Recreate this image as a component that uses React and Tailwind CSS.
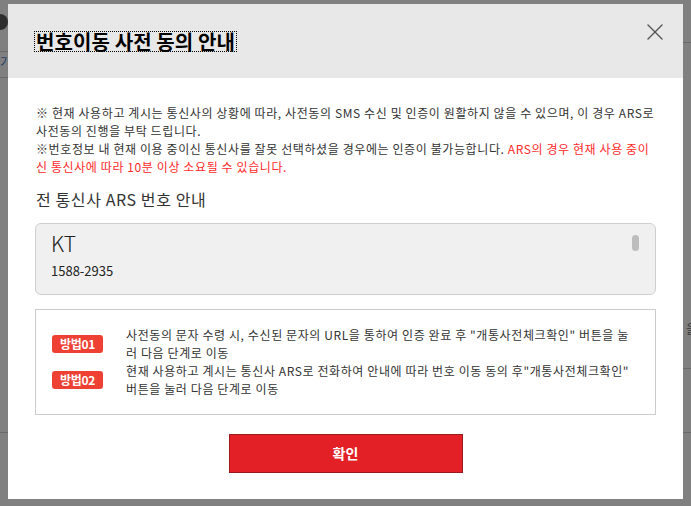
import { X } from 'lucide-react';

const font = { fontFamily: '"Noto Sans CJK KR", "Noto Sans", sans-serif' };

const methods = [
  {
    label: '방법01',
    lines: ['사전동의 문자 수령 시, 수신된 문자의 URL을 통하여 인증 완료 후 "개통사전체크확인" 버튼을 눌', '러 다음 단계로 이동'],
  },
  {
    label: '방법02',
    lines: ['현재 사용하고 계시는 통신사 ARS로 전화하여 안내에 따라 번호 이동 동의 후"개통사전체크확인"', '버튼을 눌러 다음 단계로 이동'],
  },
];

const App = () => {
  return (
    <div className="relative w-[691px] h-[506px] overflow-hidden bg-[#808080] pl-[8px] pt-[4px]" style={font}>
      {/* dimmed page behind the modal */}
      <div className="absolute left-[-8px] top-[14px] w-4 h-4 rounded-full bg-[#2e2e2e]" />
      <div className="absolute left-0 top-[51px] w-2 h-px bg-[#6a6a6a]" />
      <div className="absolute left-0 top-[55px] text-[12px] leading-[14px] text-[#1f3f6a]">기</div>
      <div className="absolute left-0 top-[77px] w-2 h-px bg-[#6a6a6a]" />
      <div className="absolute left-0 top-[432px] w-2 h-px bg-[#6a6a6a]" />
      <div className="absolute right-0 top-[42px] w-2 h-px bg-[#6a6a6a]" />
      <div className="absolute right-[-6px] top-[322px] text-[12px] leading-[14px] text-[#3a3a3a]">을</div>
      <div className="absolute right-0 top-[368px] w-2 h-px bg-[#6a6a6a]" />
      <div className="absolute right-0 top-[432px] w-2 h-px bg-[#6a6a6a]" />

      {/* modal */}
      <div className="relative w-[675px] h-[495px] bg-white">
        <div className="relative h-[74px] bg-[#e8e8e8] flex items-center px-[28px]">
          <h2 className="text-[20px] font-bold text-black leading-[17px] outline-1 outline-dotted outline-black outline-offset-[1px] tracking-[0.1px]">
            번호이동 사전 동의 안내
          </h2>
          <button className="absolute right-[14px] top-[14px] text-[#555]">
            <X size={28} strokeWidth={1.2} />
          </button>
        </div>

        <div className="px-[27px] pt-[26px]">
          <p className="text-[12px] leading-[18px] text-[#333] whitespace-nowrap tracking-[0.6px] pl-px">
            ※ 현재 사용하고 계시는 통신사의 상황에 따라, 사전동의 SMS 수신 및 인증이 원활하지 않을 수 있으며, 이 경우 ARS로
            <br />
            사전동의 진행을 부탁 드립니다.
            <br />
            ※번호정보 내 현재 이용 중이신 통신사를 잘못 선택하셨을 경우에는 인증이 불가능합니다.{' '}
            <span className="text-[#ff2a2a]">
              ARS의 경우 현재 사용 중이
              <br />
              신 통신사에 따라 10분 이상 소요될 수 있습니다.
            </span>
          </p>

          <h3 className="mt-[12px] text-[16px] leading-[22px] text-[#333] tracking-[0.6px] pl-px">전 통신사 ARS 번호 안내</h3>

          <div className="relative mt-[13px] h-[72px] rounded-[6px] border border-[#cfcfcf] bg-[#f0f0f0] pl-[15px] pt-[7px]">
            <div className="text-[21px] leading-[24px] text-[#222] font-light">KT</div>
            <div className="mt-[7px] text-[13px] leading-[18px] text-[#222]">1588-2935</div>
            <div className="absolute right-[16px] top-[11px] w-[7px] h-[16px] rounded-full bg-[#bdbdbd]" />
          </div>

          <div className="mt-[14px] border border-[#cccccc] px-[16px] py-[16px]">
            {methods.map((m) => (
              <div key={m.label} className="flex items-center gap-[23px]">
                <span className="shrink-0 w-[51px] h-[18px] rounded-[3px] bg-[#ee4033] text-white text-[12px] leading-[18px] text-center font-bold tracking-[-0.3px]">
                  {m.label}
                </span>
                <p className="text-[12px] leading-[18px] text-[#333] whitespace-nowrap tracking-[0.6px]">
                  {m.lines[0]}
                  <br />
                  {m.lines[1]}
                </p>
              </div>
            ))}
          </div>

          <div className="flex justify-center mt-[19px]">
            <button className="w-[234px] h-[39px] bg-[#e32026] border border-[#9b1a1e] text-white text-[14px] font-bold">
              확인
            </button>
          </div>
        </div>
      </div>
    </div>
  );
};

export default App;
